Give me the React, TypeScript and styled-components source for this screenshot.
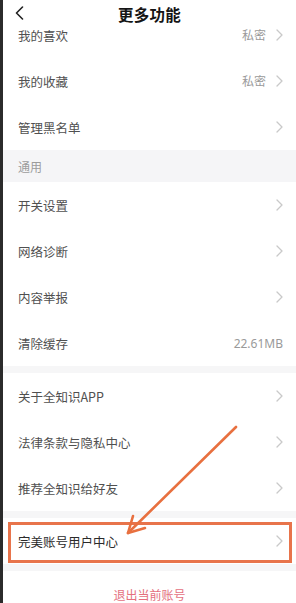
import React from "react";
import styled, { createGlobalStyle } from "styled-components";

const GlobalStyle = createGlobalStyle`
  html, body { margin: 0; padding: 0; background: #fff; }
  body { font-family: "Noto Sans CJK SC", "Noto Sans", sans-serif; }
`;

const Screen = styled.div`
  position: relative;
  display: flex;
  width: 296px;
  height: 603px;
  overflow: hidden;
  background: #fff;
`;

const EdgeStrip = styled.div`
  width: 3px;
  flex: none;
  background: #2b2b2b;
`;

const Main = styled.div`
  flex: 1;
  display: flex;
  flex-direction: column;
  min-width: 0;
`;

const Header = styled.header`
  position: relative;
  z-index: 1;
  height: 28px;
  flex: none;
  display: grid;
  grid-template-columns: 40px 1fr 40px;
  align-items: center;
  background: #fff;
`;

const BackButton = styled.div`
  display: flex;
  align-items: center;
  padding-left: 12px;
  margin-bottom: 2px;
`;

const Title = styled.h1`
  margin: 0;
  text-align: center;
  font-size: 15.5px;
  font-weight: 700;
  color: #151515;
  letter-spacing: 0.3px;
`;

const Viewport = styled.div`
  flex: 1;
  overflow: hidden;
`;

const List = styled.div`
  margin-top: -16px;
  display: flex;
  flex-direction: column;
`;

const Row = styled.div<{ $strong?: boolean }>`
  position: relative;
  height: 46px;
  flex: none;
  display: flex;
  align-items: center;
  justify-content: space-between;
  padding: 0 13px 0 15px;
  background: #fff;
  font-size: 12.5px;
  color: ${(p) => (p.$strong ? "#2a2a2a" : "#505050")};
`;

const Label = styled.span``;

const Right = styled.div`
  display: flex;
  align-items: center;
  gap: 10px;
`;

const Value = styled.span`
  font-size: 12px;
  color: #9a9a9a;
  font-family: "Noto Sans", "Noto Sans CJK SC", sans-serif;
`;

const SectionHeader = styled.div`
  height: 32px;
  display: flex;
  align-items: center;
  padding-left: 15px;
  background: #f5f5f7;
  font-size: 12px;
  color: #9c9c9c;
`;

const Divider = styled.div`
  height: 7px;
  background: #f6f6f7;
`;

const LogoutRow = styled.div`
  height: 46px;
  display: flex;
  align-items: center;
  justify-content: center;
  font-size: 12px;
  color: #e4707e;
  background: #fff;
`;

const Highlight = styled.div`
  position: absolute;
  top: 4px;
  bottom: 1px;
  left: 5px;
  right: 4px;
  border: 3px solid #e8744b;
  pointer-events: none;
`;

const ArrowLayer = styled.svg`
  position: absolute;
  left: 0;
  top: 0;
  pointer-events: none;
  z-index: 2;
`;

const Chevron = () => (
  <svg width="7" height="12" viewBox="0 0 7 12">
    <path d="M1 1 L6 6 L1 11" fill="none" stroke="#c9c9c9" strokeWidth="1.3" strokeLinecap="round" strokeLinejoin="round" />
  </svg>
);

const BackIcon = () => (
  <svg width="9" height="14" viewBox="0 0 9 14">
    <path d="M7.5 1 L1.5 7 L7.5 13" fill="none" stroke="#222" strokeWidth="1.6" strokeLinecap="round" strokeLinejoin="round" />
  </svg>
);

type Item = { label: string; value?: string; chevron?: boolean };

const ItemRow = ({ label, value, chevron = true }: Item) => (
  <Row>
    <Label>{label}</Label>
    <Right>
      {value && <Value>{value}</Value>}
      {chevron && <Chevron />}
    </Right>
  </Row>
);

export default function App() {
  return (
    <>
      <GlobalStyle />
      <Screen>
        <EdgeStrip />
        <Main>
          <Header>
            <BackButton>
              <BackIcon />
            </BackButton>
            <Title>更多功能</Title>
            <div />
          </Header>
          <Viewport>
            <List>
              <ItemRow label="我的喜欢" value="私密" />
              <ItemRow label="我的收藏" value="私密" />
              <ItemRow label="管理黑名单" />
              <SectionHeader>通用</SectionHeader>
              <ItemRow label="开关设置" />
              <ItemRow label="网络诊断" />
              <ItemRow label="内容举报" />
              <ItemRow label="清除缓存" value="22.61MB" chevron={false} />
              <Divider />
              <ItemRow label="关于全知识APP" />
              <ItemRow label="法律条款与隐私中心" />
              <ItemRow label="推荐全知识给好友" />
              <Divider />
              <Row $strong>
                <Label>完美账号用户中心</Label>
                <Right>
                  <Chevron />
                </Right>
                <Highlight />
              </Row>
              <Divider />
              <LogoutRow>退出当前账号</LogoutRow>
            </List>
          </Viewport>
        </Main>
        <ArrowLayer width="296" height="603" viewBox="0 0 296 603">
          <g fill="none" stroke="#e8703f" strokeWidth="2.6" strokeLinecap="round" strokeLinejoin="round">
            <path d="M236 427 L128 533" />
            <path d="M133 516 L128 533 L145 528" />
          </g>
        </ArrowLayer>
      </Screen>
    </>
  );
}
